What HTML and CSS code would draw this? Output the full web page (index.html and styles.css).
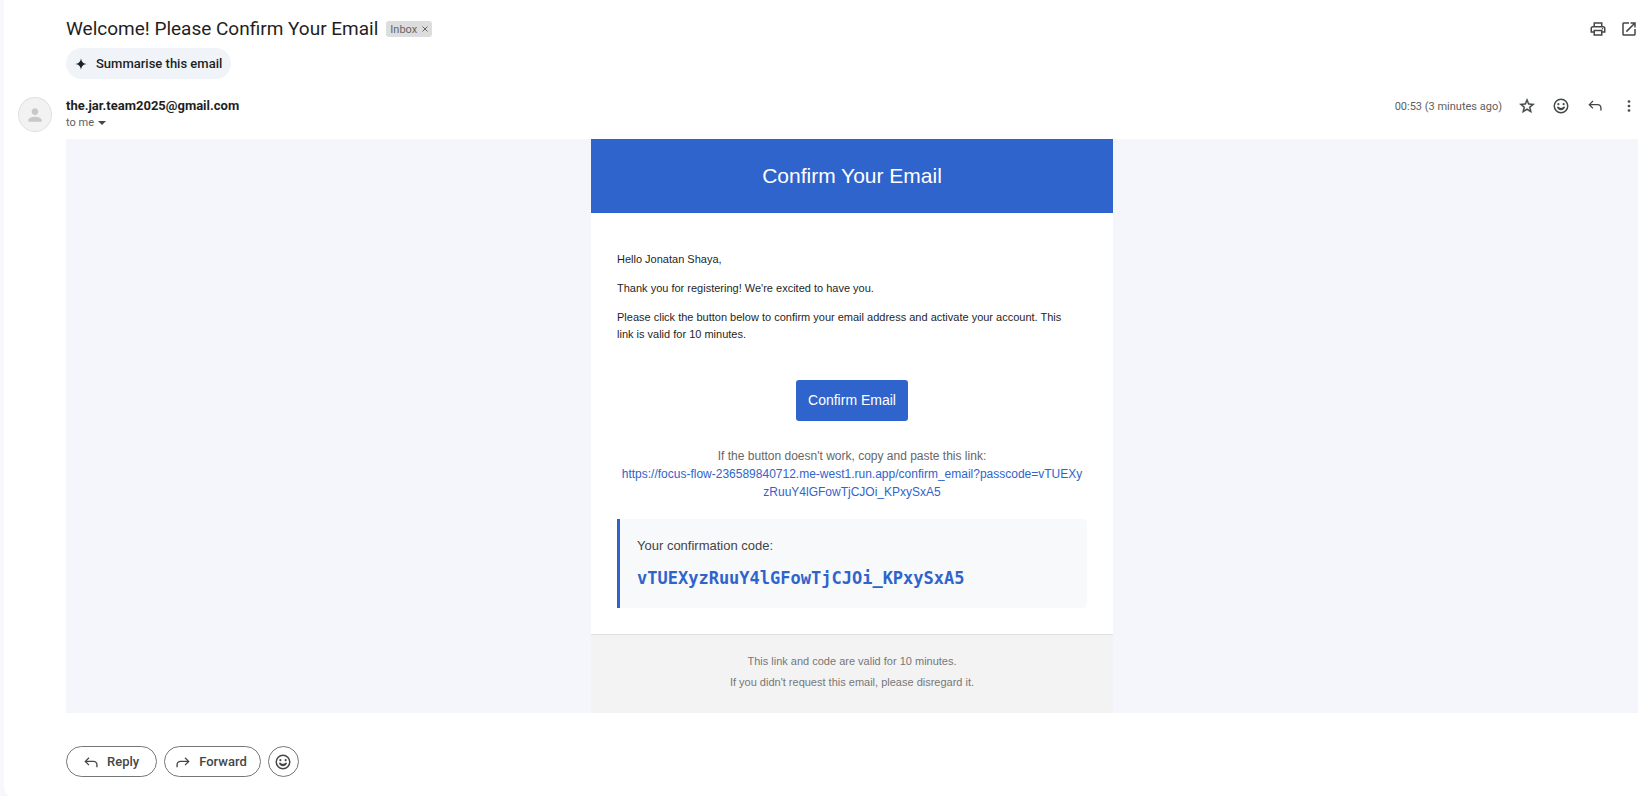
FILE: index.html
```html
<!DOCTYPE html>
<html lang="en">
<head>
    <meta charset="UTF-8">
    <meta name="viewport" content="width=device-width, initial-scale=1.0">
    <title>Welcome! Please Confirm Your Email</title>
    <link rel="stylesheet" href="styles.css">
</head>
<body>
    <main class="pane">
        <header class="subject-row">
            <h1>Welcome! Please Confirm Your Email</h1>
            <span class="label">Inbox <button class="label-remove" aria-label="Remove label"><svg viewBox="0 0 6 6"><path d="M.5.5l5 5M5.500.5l-5 5"/></svg></button></span>
            <div class="tools">
                <button class="icon-button" aria-label="Print all">
                    <svg viewBox="0 0 24 24"><path d="M19 8h-1V3H6v5H5c-1.66 0-3 1.34-3 3v6h4v4h12v-4h4v-6c0-1.66-1.34-3-3-3zM8 5h8v3H8V5zm8 14H8v-4h8v4zm2-4v-2H6v2H4v-4c0-.55.45-1 1-1h14c.55 0 1 .45 1 1v4h-2z"/><circle cx="18" cy="11.5" r="1"/></svg>
                </button>
                <button class="icon-button" aria-label="In new window">
                    <svg viewBox="0 0 24 24"><path d="M19 19H5V5h7V3H5c-1.11 0-2 .9-2 2v14c0 1.1.89 2 2 2h14c1.1 0 2-.9 2-2v-7h-2v7zM14 3v2h3.59l-9.83 9.83 1.41 1.41L19 6.41V10h2V3h-7z"/></svg>
                </button>
            </div>
        </header>

        <button class="summarise">
            <svg viewBox="0 0 24 24"><path d="M12 2c1 6.500 3.500 9 10 10-6.500 1-9 3.500-10 10-1-6.500-3.500-9-10-10 6.500-1 9-3.500 10-10z"/></svg>
            Summarise this email
        </button>

        <section class="sender-row">
            <div class="avatar">
                <svg viewBox="0 0 24 24"><path d="M12 12c2.21 0 4-1.79 4-4s-1.79-4-4-4-4 1.79-4 4 1.79 4 4 4zm0 2c-2.67 0-8 1.34-8 4v2h16v-2c0-2.66-5.33-4-8-4z"/></svg>
            </div>
            <div class="sender">
                <h2>the.jar.team2025@gmail.com</h2>
                <button class="recipient">to me <span class="caret"></span></button>
            </div>
            <div class="message-tools">
                <time>00:53 (3 minutes ago)</time>
                <button class="icon-button star" aria-label="Star">
                    <svg viewBox="0 0 24 24"><path d="M22 9.24l-7.19-.62L12 2 9.19 8.63 2 9.24l5.46 4.73L5.82 21 12 17.27 18.18 21l-1.63-7.03L22 9.24zM12 15.4l-3.76 2.27 1-4.28-3.32-2.88 4.38-.38L12 6.1l1.71 4.04 4.38.38-3.32 2.88 1 4.28L12 15.4z"/></svg>
                </button>
                <button class="icon-button" aria-label="Add reaction">
                    <svg viewBox="0 0 24 24"><path d="M12 2a10 10 0 1 0 0 20 10 10 0 0 0 0-20zm0 18a8 8 0 1 1 0-16 8 8 0 0 1 0 16zM6.500 13c.6 2.900 2.800 4.800 5.500 4.800s4.900-1.900 5.500-4.800h-2.500c-.5.900-1.600 1.500-3 1.500s-2.500-.6-3-1.500z"/><circle cx="8.500" cy="9.500" r="1.400"/><circle cx="15.500" cy="9.500" r="1.400"/></svg>
                </button>
                <button class="icon-button" aria-label="Reply">
                    <svg viewBox="0 0 24 24"><path d="M19 18v-3.500c0-1.900-1.400-3.500-3.500-3.500H6.400l3.500 3.500-1.200 1.200L3.200 10.200l5.500-5.500 1.200 1.200-3.500 3.500h9.100c3 0 5.300 2.200 5.300 5.100V18H19z"/></svg>
                </button>
                <button class="icon-button" aria-label="More">
                    <svg viewBox="0 0 24 24"><circle cx="12" cy="6" r="1.800"/><circle cx="12" cy="12" r="1.800"/><circle cx="12" cy="18" r="1.800"/></svg>
                </button>
            </div>
        </section>

        <article class="mail-body">
            <div class="card">
                <div class="card-header">Confirm Your Email</div>
                <div class="card-content">
                    <div class="greeting">
                        <p>Hello Jonatan Shaya,</p>
                        <p>Thank you for registering! We're excited to have you.</p>
                        <p>Please click the button below to confirm your email address and activate your account. This link is valid for 10 minutes.</p>
                    </div>
                    <a class="confirm" href="#">Confirm Email</a>
                    <p class="fallback">
                        If the button doesn't work, copy and paste this link:<br>
                        <a href="#">https://focus-flow-236589840712.me-west1.run.app/confirm_email?passcode=vTUEXyzRuuY4lGFowTjCJOi_KPxySxA5</a>
                    </p>
                    <div class="code-box">
                        <p>Your confirmation code:</p>
                        <code>vTUEXyzRuuY4lGFowTjCJOi_KPxySxA5</code>
                    </div>
                </div>
                <footer class="card-footer">
                    <p>This link and code are valid for 10 minutes.</p>
                    <p>If you didn't request this email, please disregard it.</p>
                </footer>
            </div>
        </article>

        <div class="actions">
            <button class="pill reply">
                <svg viewBox="0 0 24 24"><path d="M19 19v-3.500c0-1.900-1.400-3.500-3.500-3.500H6.400l3.500 3.500-1.200 1.200L3.200 11.200l5.500-5.500 1.200 1.200-3.500 3.500h9.100c3 0 5.300 2.200 5.300 5.100V19H19z"/></svg>
                Reply
            </button>
            <button class="pill">
                <svg viewBox="0 0 24 24"><path d="M5 19v-3.500c0-1.900 1.400-3.500 3.500-3.500h9.100l-3.500 3.500 1.200 1.200 5.500-5.500-5.500-5.500-1.200 1.200 3.500 3.500H8.500c-3 0-5.300 2.200-5.300 5.100V19H5z"/></svg>
                Forward
            </button>
            <button class="pill round" aria-label="Add reaction">
                <svg viewBox="0 0 24 24"><path d="M12 2a10 10 0 1 0 0 20 10 10 0 0 0 0-20zm0 18a8 8 0 1 1 0-16 8 8 0 0 1 0 16zM6.500 13c.6 2.900 2.800 4.800 5.500 4.800s4.900-1.900 5.500-4.800h-2.500c-.5.900-1.600 1.500-3 1.500s-2.500-.6-3-1.500z"/><circle cx="8.500" cy="9.500" r="1.400"/><circle cx="15.500" cy="9.500" r="1.400"/></svg>
            </button>
        </div>
    </main>
</body>
</html>
```
FILE: styles.css
```css
* {
    box-sizing: border-box;
}
body {
    margin: 0;
    background-color: #f6f8fc;
    font-family: Roboto, sans-serif;
    color: #1f1f1f;
}
h1, h2, p {
    margin: 0;
}
button {
    font-family: inherit;
    color: inherit;
    border: none;
    background: none;
    padding: 0;
    cursor: pointer;
}
svg {
    display: block;
    width: 18px;
    height: 18px;
    fill: #444746;
}
.pane {
    margin-left: 4px;
    min-height: 100vh;
    padding: 16px 3px 20px 62px;
    background-color: white;
    border-bottom-left-radius: 10px;
}
.subject-row {
    display: flex;
    align-items: center;
    height: 26px;
    gap: 8px;
}
.subject-row h1 {
    font-size: 19px;
    line-height: 26px;
    font-weight: 400;
}
.label {
    display: flex;
    align-items: center;
    gap: 5px;
    height: 16px;
    padding: 0 4px;
    border-radius: 3px;
    background-color: #ddd;
    color: #666;
    font-size: 11px;
}
.label-remove svg {
    width: 6px;
    height: 6px;
    stroke: #666;
}
.tools {
    display: flex;
    gap: 13px;
    margin-left: auto;
}
.summarise {
    display: flex;
    align-items: center;
    gap: 8px;
    height: 31px;
    margin-top: 6px;
    padding: 0 9px 0 8px;
    border-radius: 16px;
    background-color: #f0f4f9;
    font-size: 13px;
    font-weight: 500;
}
.summarise svg {
    width: 14px;
    height: 14px;
    fill: #1f1f1f;
}
.sender-row {
    display: flex;
    align-items: flex-start;
    margin: 18px 0 7px -48px;
}
.avatar {
    display: grid;
    place-items: center;
    width: 34px;
    height: 35px;
    margin-right: 14px;
    border: 1px solid #e0e0e0;
    border-radius: 50%;
    background-color: #f2f2f2;
}
.avatar svg {
    width: 20px;
    height: 20px;
    fill: #c8c8c8;
}
.sender h2 {
    font-size: 13px;
    line-height: 18px;
    font-weight: 700;
}
.recipient {
    display: flex;
    align-items: center;
    gap: 4px;
    font-size: 11px;
    line-height: 16px;
    color: #5e5e5e;
}
.caret {
    border: 4px solid transparent;
    border-top-color: #444746;
    border-bottom: none;
}
.message-tools {
    display: flex;
    align-items: center;
    gap: 16px;
    height: 18px;
    margin-left: auto;
}
.message-tools time {
    font-size: 11px;
    color: #5e5e5e;
}
.star svg {
    stroke: #444746;
    stroke-width: 0.5;
}
.mail-body {
    background-color: #f4f6fb;
    font-family: "Liberation Sans", Arial, sans-serif;
}
.card {
    max-width: 522px;
    margin: 0 auto;
    background-color: white;
}
.card-header {
    padding: 24px;
    background-color: #2f64cc;
    color: white;
    font-size: 21px;
    line-height: 26px;
    text-align: center;
}
.card-content {
    padding: 38px 26px 26px;
}
.greeting {
    padding-right: 10px;
    font-size: 11px;
    line-height: 17px;
    font-weight: 500;
}
.greeting p {
    margin-bottom: 12px;
}
.confirm {
    display: block;
    width: fit-content;
    margin: 37px auto 26px;
    padding: 12px;
    border-radius: 3px;
    background-color: #2f64cc;
    color: white;
    font-size: 14px;
    line-height: 17px;
    text-decoration: none;
}
.fallback {
    padding: 0 2px;
    font-size: 12px;
    line-height: 18px;
    color: #666;
    text-align: center;
}
.fallback a {
    color: #2f64cc;
    text-decoration: none;
    word-break: break-all;
}
.code-box {
    margin-top: 18px;
    padding: 17px;
    border-left: 3px solid #2f64cc;
    border-radius: 0 4px 4px 0;
    background-color: #f7f9fb;
    color: #444;
    font-size: 13px;
    line-height: 20px;
}
.code-box code {
    display: block;
    margin-top: 9px;
    font-family: "DejaVu Sans Mono", monospace;
    font-size: 17px;
    line-height: 26px;
    font-weight: 700;
    color: #2f64cc;
}
.card-footer {
    padding: 16px 26px 20px;
    border-top: 1px solid #e0e0e0;
    background-color: #f3f3f3;
    color: #777;
    font-size: 11px;
    line-height: 21px;
    text-align: center;
}
.actions {
    display: flex;
    gap: 7px;
    margin-top: 33px;
}
.pill {
    display: flex;
    align-items: center;
    justify-content: center;
    gap: 7px;
    height: 31px;
    padding: 0 13px 0 9px;
    border: 1px solid #747775;
    border-radius: 16px;
    color: #444746;
    font-size: 13px;
    font-weight: 500;
}
.reply {
    padding: 0 17px 0 15px;
}
.round {
    width: 31px;
    padding: 0;
}
```
